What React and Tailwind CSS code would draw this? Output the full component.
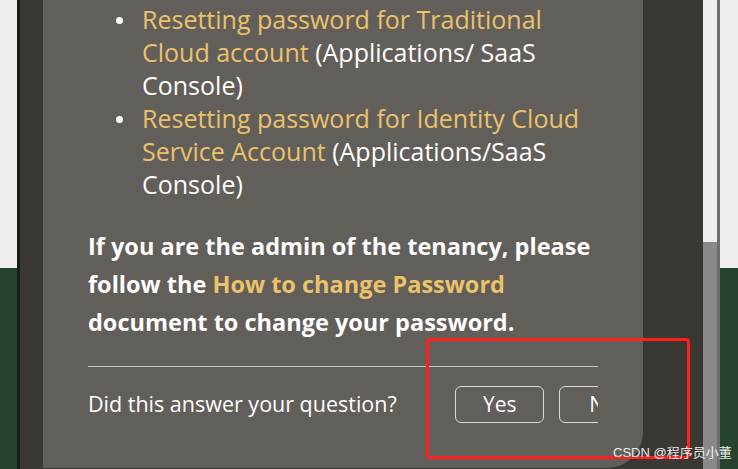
export default function App() {
  return (
    <div className="relative flex h-[469px] w-[738px] overflow-hidden bg-[#eeeeee]">
      {/* left page strip */}
      <div className="flex w-[17px] flex-col">
        <div className="h-[268px] bg-[#eeeeee]" />
        <div className="flex-1 bg-[#26432e]" />
      </div>
      <div className="w-[3px] bg-[#1c1c1c]" />
      <div className="w-[23px] bg-[#3b3733]" />

      {/* answer panel */}
      <div className="flex w-[660px] flex-col bg-[#3b3733] pb-px">
        <div className="flex h-full w-[600px] flex-col rounded-br-[36px] bg-[#625e5a] px-[45px]">
          <div className="w-[510px] overflow-hidden" style={{ fontFamily: '"Open Sans", sans-serif' }}>
            <ul className="w-[560px] pt-[3px] text-[25px] leading-[33px] whitespace-nowrap text-white">
              <li className="flex">
                <span className="mt-[14px] ml-[28px] mr-[19px] h-[7px] w-[7px] shrink-0 rounded-full bg-white" />
                <span>
                  <span className="text-[#eac36b]">Resetting password for Traditional<br />Cloud account</span> (Applications/ SaaS<br />Console)
                </span>
              </li>
              <li className="flex">
                <span className="mt-[14px] ml-[28px] mr-[19px] h-[7px] w-[7px] shrink-0 rounded-full bg-white" />
                <span>
                  <span className="text-[#eac36b]">Resetting password for Identity Cloud<br />Service Account</span> (Applications/SaaS<br />Console)
                </span>
              </li>
            </ul>

            <p className="mt-[26px] text-[23.5px] font-bold leading-[38px] whitespace-nowrap text-white">
              If you are the admin of the tenancy, please<br />
              follow the <span className="text-[#eac36b]">How to change Password</span><br />
              document to change your password.
            </p>

            <div className="mt-[25px] h-px w-full bg-[#c9c6c3]" />

            <div className="mt-[19px] flex w-[560px] items-center">
              <span className="w-[368px] text-[21.5px] text-white">Did this answer your question?</span>
              <button className="h-[37px] w-[89px] rounded-[6px] border border-[#dcdad8] text-[21px] text-white">Yes</button>
              <button className="ml-[15px] h-[37px] w-[89px] rounded-[6px] border border-[#dcdad8] text-[21px] text-white">No</button>
            </div>
          </div>
        </div>
      </div>

      {/* scrollbar */}
      <div className="flex w-[14px] flex-col">
        <div className="h-[242px] bg-[#eeeeee]" />
        <div className="flex-1 bg-[#898989]" />
      </div>
      <div className="w-[3px] bg-[#6e6e6e]" />
      <div className="flex w-[18px] flex-col">
        <div className="h-[268px] bg-[#eeeeee]" />
        <div className="flex-1 bg-[#26432e]" />
      </div>

      {/* annotation box */}
      <div className="absolute left-[426px] top-[338px] h-[121px] w-[264px] rounded-[4px] border-[3px] border-[#ff1f1f]" />

      {/* watermark */}
      <span
        className="absolute left-[613px] top-[443px] text-[13px] text-white/90"
        style={{ fontFamily: '"Liberation Sans", "Noto Sans CJK SC", sans-serif' }}
      >
        CSDN @程序员小董
      </span>
    </div>
  );
}
